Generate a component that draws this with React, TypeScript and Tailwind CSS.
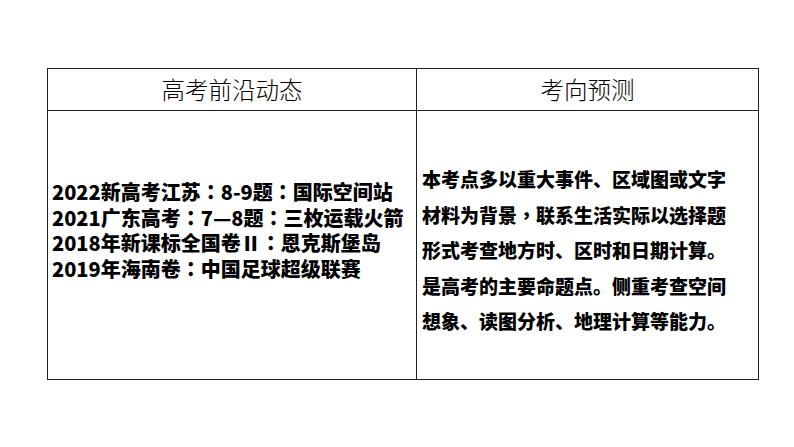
const cjk = "font-['Noto_Sans_CJK_SC','Noto_Sans',sans-serif]";

const events = [
  "2022新高考江苏：8-9题：国际空间站",
  "2021广东高考：7—8题：三枚运载火箭",
  "2018年新课标全国卷Ⅱ：恩克斯堡岛",
  "2019年海南卷：中国足球超级联赛",
];

const forecast = [
  "本考点多以重大事件、区域图或文字",
  "材料为背景，联系生活实际以选择题",
  "形式考查地方时、区时和日期计算。",
  "是高考的主要命题点。侧重考查空间",
  "想象、读图分析、地理计算等能力。",
];

// full-width colons sit centred in the original, TC glyphs do that
function Line({ text }: { text: string }) {
  const parts = text.split(/(：|，)/);
  return (
    <div>
      {parts.map((p, i) =>
        p === "：" || p === "，" ? (
          <span key={i} className="font-['Noto_Sans_CJK_TC',sans-serif]">
            {p}
          </span>
        ) : (
          <span key={i}>{p}</span>
        )
      )}
    </div>
  );
}

export default function App() {
  return (
    <div className={`w-[794px] h-[447px] bg-white ${cjk} text-black`}>
      <div className="pt-[68px] pl-[47px]">
        <div className="grid w-[712px] grid-cols-[369px_341px] grid-rows-[42px_268px] border border-[#222]">
          <div className="border-r border-b border-[#222] flex items-center justify-center text-[23.5px] font-light text-black">
            高考前沿动态
          </div>
          <div className="border-b border-[#222] flex items-center justify-center text-[23.5px] font-light text-black">
            考向预测
          </div>
          <div className="border-r border-[#222] pt-[68px] pl-[4px] text-[20px] font-black leading-[25.5px] whitespace-nowrap">
            {events.map((e) => (
              <Line key={e} text={e} />
            ))}
          </div>
          <div className="pt-[50px] pl-[5px] text-[19px] font-black leading-[35.5px] whitespace-nowrap">
            {forecast.map((f) => (
              <Line key={f} text={f} />
            ))}
          </div>
        </div>
      </div>
    </div>
  );
}
